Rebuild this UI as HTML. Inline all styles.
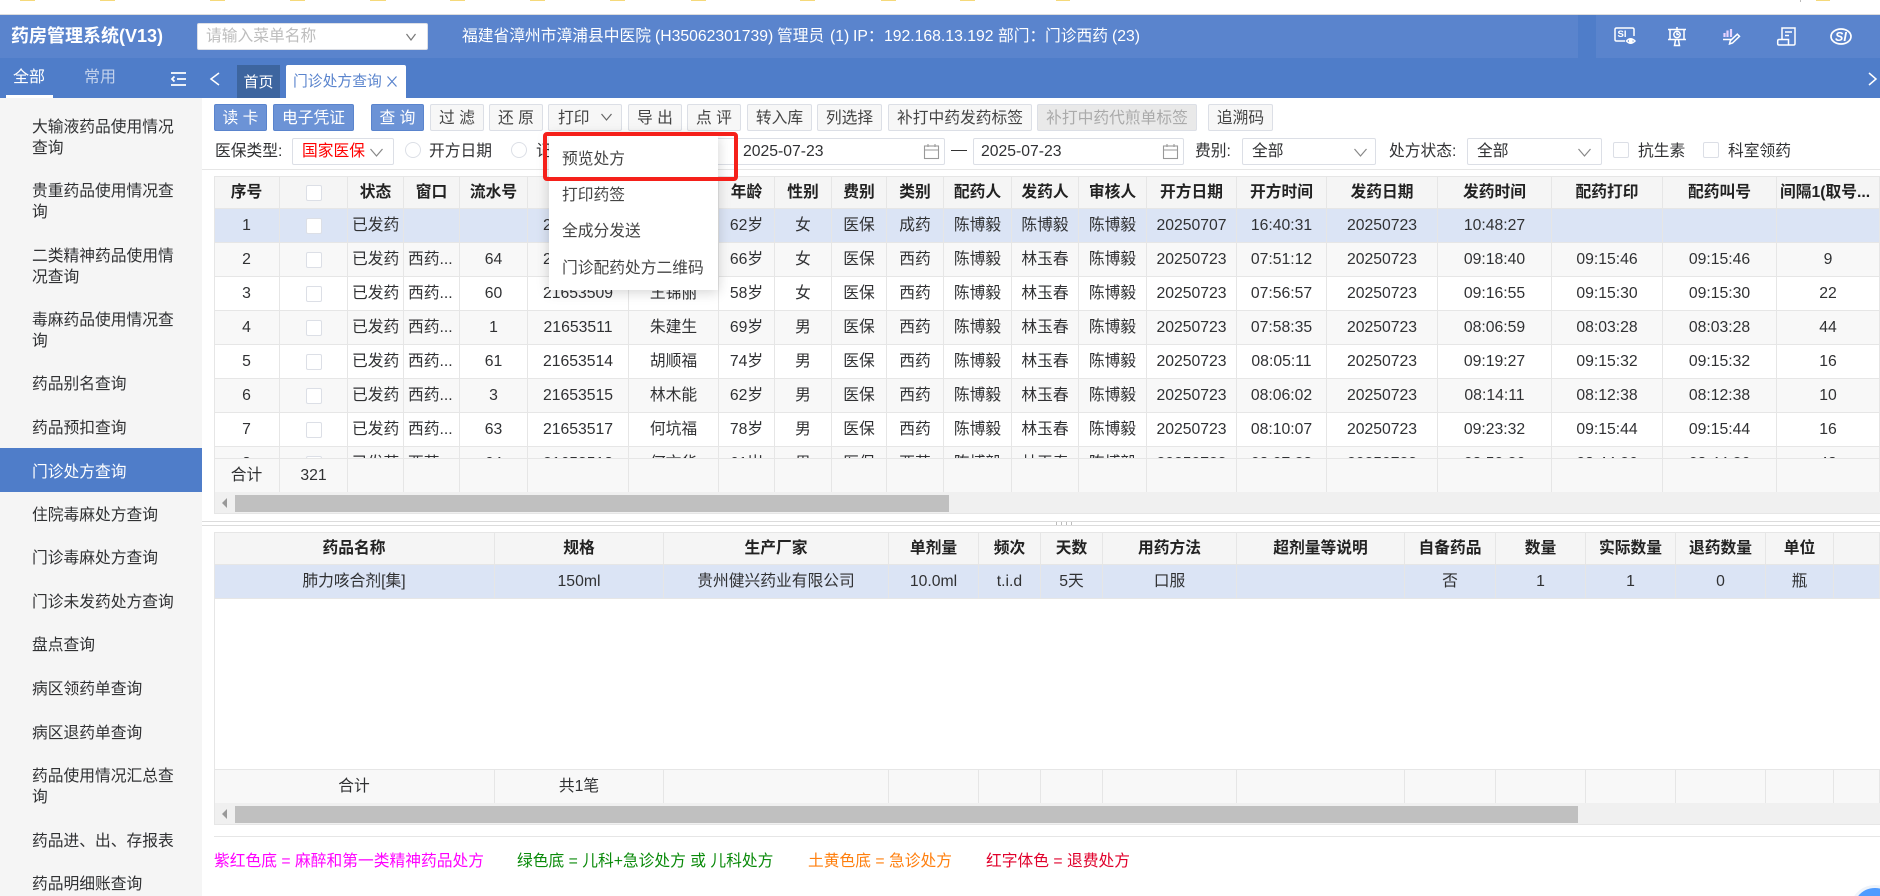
<!DOCTYPE html>
<html lang="zh-CN">
<head>
<meta charset="utf-8">
<title>门诊处方查询</title>
<style>
*{box-sizing:border-box}
html,body{margin:0;padding:0;width:1880px;height:896px;overflow:hidden;background:#fff}
body{position:relative;font-family:"Liberation Sans","Noto Sans CJK SC",sans-serif;font-size:15.75px;color:#303133}
.a{position:absolute;white-space:nowrap}
.y{position:absolute;top:0;height:1px;background:#f5d97a}
.m{position:absolute;left:32px;width:145px;line-height:21px;color:#303133}
.b{position:absolute;top:104px;height:27px;line-height:27px;text-align:center;border:1px solid #dcdfe6;background:#f7f7f7;border-radius:2px;color:#444;white-space:pre}
.p{background:#6c93d6;border-color:#5a84cd;color:#fff}
.d{background:#e9e9e9;color:#aaa}
.s{position:absolute;top:138px;height:27px;border:1px solid #dcdfe6;border-radius:2px;background:#fff;line-height:25px;white-space:nowrap}
.c{position:absolute;width:16px;height:16px;border:1px solid #dcdfe6;border-radius:2px;background:#fff}
.r{position:absolute;top:142px;width:16px;height:16px;border:1px solid #dcdfe6;border-radius:50%;background:#fff}
.tw{position:absolute;left:214px;width:1666px;overflow:hidden}
table{border-collapse:separate;border-spacing:0;table-layout:fixed;width:1666px}
td,th{height:34px;padding:1px 0 0;border-right:1px solid #e6e6e6;border-bottom:1px solid #e6e6e6;text-align:center;white-space:nowrap;overflow:hidden;font-weight:normal;position:relative;line-height:20px;vertical-align:middle}
th{height:33px;font-weight:bold;background:#f5f5f5;color:#222}
tr:first-child th{border-top:1px solid #e6e6e6}
tr.z td{background:#f8f8f8}
tr.w td{background:#fff}
tr.sel td{background:#dbe4f5}
tr.f td{background:#f8f8f8}
td.l{text-align:left;padding-left:4px}
i.k{display:block;width:16px;height:16px;border:1px solid #dcdfe6;border-radius:2px;background:#fff;margin:0 auto}
.tk{position:absolute;left:214px;width:1666px;background:#f0f0f0;border-bottom:1px solid #e6e6e6;border-left:1px solid #e6e6e6}
.th{position:absolute;left:235px;background:#c0c0c0}
.tri{position:absolute;left:222px;width:0;height:0;border-top:5px solid transparent;border-bottom:5px solid transparent;border-right:5px solid #999}
.dd{position:absolute;left:549px;top:134px;width:169px;height:156px;background:#fff;box-shadow:0 2px 12px rgba(0,0,0,.18);z-index:5}
.dd div{position:absolute;left:13px;line-height:22px;white-space:nowrap;color:#444}
svg{position:absolute;overflow:visible}
</style>
</head>
<body>
<div class="y" style="left:20px;width:15px"></div><div class="y" style="left:100px;width:15px"></div><div class="y" style="left:210px;width:15px"></div><div class="y" style="left:290px;width:15px"></div><div class="y" style="left:370px;width:16px"></div><div class="y" style="left:450px;width:15px"></div><div class="y" style="left:530px;width:15px"></div><div class="y" style="left:610px;width:15px"></div><div class="y" style="left:691px;width:15px"></div><div class="y" style="left:800px;width:15px"></div><div class="y" style="left:881px;width:15px"></div><div class="y" style="left:960px;width:15px"></div><div class="y" style="left:1056px;width:14px"></div><div class="y" style="left:1816px;width:14px"></div>
<div class="a" style="left:1800px;top:0;width:1px;height:2px;background:#bbb"></div>

<!-- top header -->
<div class="a" style="left:0;top:14px;width:1880px;height:1px;background:#dcdcdc"></div>
<div class="a" style="left:0;top:15px;width:1880px;height:43px;background:#5a84cd"></div>
<div class="a" style="left:1578px;top:15px;width:18px;height:43px;background:#4f7dc9"></div>
<div class="a" style="left:11px;top:23px;line-height:26px;font-size:18px;font-weight:bold;color:#fff">药房管理系统(V13)</div>
<div class="a" style="left:197px;top:23px;width:231px;height:27px;background:#fff;border:1px solid #dcdfe6;border-radius:2px;line-height:25px;padding-left:8px;color:#bdbdbd">请输入菜单名称
<svg style="left:208px;top:9px" width="10" height="8" viewBox="0 0 10 8"><path d="M.5 1 5 7 9.5 1" fill="none" stroke="#777" stroke-width="1.2"/></svg></div>
<div class="a" style="left:462px;top:24px;line-height:25px;color:#fff">福建省漳州市漳浦县中医院</div>
<div class="a" style="left:655px;top:24px;line-height:25px;color:#fff">(H35062301739)</div>
<div class="a" style="left:777px;top:24px;line-height:25px;color:#fff">管理员</div>
<div class="a" style="left:830px;top:24px;line-height:25px;color:#fff">(1)</div>
<div class="a" style="left:853px;top:24px;line-height:25px;color:#fff">IP：</div>
<div class="a" style="left:884px;top:24px;line-height:25px;color:#fff">192.168.13.192</div>
<div class="a" style="left:998px;top:24px;line-height:25px;color:#fff">部门：</div>
<div class="a" style="left:1045px;top:24px;line-height:25px;color:#fff">门诊西药</div>
<div class="a" style="left:1112px;top:24px;line-height:25px;color:#fff">(23)</div>

<svg style="left:1614px;top:27px" width="22" height="18" viewBox="0 0 22 18" fill="none" stroke="#fff" stroke-width="1.5"><path d="M11 14H2.500Q1 14 1 12.500V2.500Q1 1 2.500 1h16Q20 1 20 2.500V9"/><path d="M12.500 14q4-4.500 8.500 0q-4.500 4.500-8.500 0z"/><circle cx="16.800" cy="14" r="1.200" fill="#fff"/><text x="3.500" y="10" font-size="9.500" font-weight="bold" fill="#fff" stroke="none" font-family="Liberation Sans">SI</text></svg>
<svg style="left:1668px;top:27px" width="18" height="19" viewBox="0 0 18 19" fill="none" stroke="#fff" stroke-width="1.500"><path d="M0 2.500h18M0 12.500h18M2 2.500v10M16 2.500v10M9 0v2.500"/><circle cx="9" cy="7.500" r="3.200"/><path d="M9 5.500v2h2M7.500 13l-1 5.500h5l-1-5.500"/></svg>
<svg style="left:1723px;top:28px" width="17" height="17" viewBox="0 0 17 17" fill="none" stroke="#fff" stroke-width="1.500"><path d="M1.500 5v4M4.500 2.500v6.500M8 1v8" stroke="#e6d3ff" stroke-width="2.200"/><path d="M0 11.500h8"/><path d="M6.500 16l.8-3.300 7-6.500 2.200 2.200-7 6.600z"/></svg>
<svg style="left:1777px;top:27px" width="19" height="19" viewBox="0 0 19 19" fill="none" stroke="#fff" stroke-width="1.500"><path d="M5 12V1h13v15.500q0 1.500-1.500 1.500H3"/><path d="M3 18H2q-1.300 0-1.300-1.500V14q0-1.500 1.300-1.500h9.500V18"/><path d="M8 5h7M8 8.500h4"/></svg>
<svg style="left:1830px;top:28px" width="22" height="17" viewBox="0 0 22 17" fill="none" stroke="#fff" stroke-width="1.700"><ellipse cx="11" cy="8.500" rx="10" ry="7.500"/><text x="5" y="13" font-size="12.500" font-weight="bold" font-style="italic" fill="#fff" stroke="none" font-family="Liberation Sans">SI</text></svg>

<!-- tab bar -->
<div class="a" style="left:0;top:58px;width:1880px;height:40px;background:#4f7dc9"></div>
<div class="a" style="left:13px;top:66px;line-height:23px;color:#fff;font-size:16px">全部</div>
<div class="a" style="left:6px;top:95px;width:47px;height:3px;background:#fff"></div>
<div class="a" style="left:84px;top:66px;line-height:23px;color:#c3d2ec;font-size:16px">常用</div>
<svg style="left:171px;top:72px" width="15" height="14" viewBox="0 0 15 14" fill="none" stroke="#fff" stroke-width="1.800"><path d="M0 1h15M6 7h9M0 13h15M3.500 4.500 1 7l2.500 2.500"/></svg>
<svg style="left:210px;top:72px" width="10" height="14" viewBox="0 0 10 14" fill="none" stroke="#fff" stroke-width="1.500"><path d="M9 1 1 7l8 6"/></svg>
<svg style="left:1868px;top:72px" width="9" height="14" viewBox="0 0 9 14" fill="none" stroke="#fff" stroke-width="1.500"><path d="M1 1l7 6-7 6"/></svg>
<div class="a" style="left:237px;top:65px;width:43px;height:33px;background:#3d659f;color:#fff;text-align:center;line-height:35px;font-size:15px">首页</div>
<div class="a" style="left:286px;top:65px;width:120px;height:33px;background:#fff;border-radius:2px 2px 0 0;color:#5a84cd;line-height:35px;padding-left:7px;font-size:14.800px">门诊处方查询</div>
<svg style="left:387px;top:76px" width="10" height="11" viewBox="0 0 10 11" fill="none" stroke="#5a84cd" stroke-width="1.200"><path d="M.5.500l9 10M9.500.500l-9 10"/></svg>

<!-- sidebar -->
<div class="a" style="left:0;top:98px;width:202px;height:798px;background:#f5f5f5"></div>
<div class="a" style="left:0;top:448px;width:202px;height:44px;background:#4f7dc9"></div>
<div class="m" style="top:117px">大输液药品使用情况<br>查询</div>
<div class="m" style="top:181px">贵重药品使用情况查<br>询</div>
<div class="m" style="top:246px">二类精神药品使用情<br>况查询</div>
<div class="m" style="top:310px">毒麻药品使用情况查<br>询</div>
<div class="m" style="top:374px">药品别名查询</div>
<div class="m" style="top:418px">药品预扣查询</div>
<div class="m" style="top:462px;color:#fff">门诊处方查询</div>
<div class="m" style="top:505px">住院毒麻处方查询</div>
<div class="m" style="top:548px">门诊毒麻处方查询</div>
<div class="m" style="top:592px">门诊未发药处方查询</div>
<div class="m" style="top:635px">盘点查询</div>
<div class="m" style="top:679px">病区领药单查询</div>
<div class="m" style="top:723px">病区退药单查询</div>
<div class="m" style="top:766px">药品使用情况汇总查<br>询</div>
<div class="m" style="top:831px">药品进、出、存报表</div>
<div class="m" style="top:874px">药品明细账查询</div>

<!-- toolbar -->
<div class="b p" style="left:214px;width:53px">读 卡</div>
<div class="b p" style="left:273px;width:81px">电子凭证</div>
<div class="b p" style="left:371px;width:53px">查 询</div>
<div class="b" style="left:430px;width:54px">过 滤</div>
<div class="b" style="left:489px;width:54px">还 原</div>
<div class="b" style="left:548px;width:74px;text-align:left;padding-left:9px">打印<svg style="left:52px;top:8px" width="11" height="8" viewBox="0 0 11 8"><path d="M.5 1 5.500 7 10.500 1" fill="none" stroke="#666" stroke-width="1.200"/></svg></div>
<div class="b" style="left:628px;width:54px">导 出</div>
<div class="b" style="left:687px;width:54px">点 评</div>
<div class="b" style="left:747px;width:65px">转入库</div>
<div class="b" style="left:817px;width:65px">列选择</div>
<div class="b" style="left:888px;width:144px">补打中药发药标签</div>
<div class="b d" style="left:1037px;width:160px">补打中药代煎单标签</div>
<div class="b" style="left:1208px;width:65px">追溯码</div>

<!-- filter row -->
<div class="a" style="left:215px;top:139px;line-height:25px">医保类型:</div>
<div class="s" style="left:292px;width:102px;padding-left:9px;color:#f00">国家医保<svg style="left:77px;top:9px" width="13" height="9" viewBox="0 0 13 9"><path d="M.5 1 6.500 8 12.500 1" fill="none" stroke="#888" stroke-width="1.200"/></svg></div>
<div class="r" style="left:405px"></div>
<div class="a" style="left:429px;top:139px;line-height:25px">开方日期</div>
<div class="r" style="left:511px"></div>
<div class="a" style="left:536px;top:139px;line-height:25px">记账日期</div>
<div class="s" style="left:700px;width:245px;padding-left:42px">2025-07-23<svg style="left:223px;top:5px" width="15" height="15" viewBox="0 0 15 15" fill="none" stroke="#999" stroke-width="1.100"><rect x=".5" y="2" width="14" height="12.500"/><path d="M.5 6h14M4 0v3M11 0v3"/></svg></div>
<div class="a" style="left:951px;top:150px;width:16px;height:1px;background:#333"></div>
<div class="s" style="left:973px;width:211px;padding-left:7px">2025-07-23<svg style="left:189px;top:5px" width="15" height="15" viewBox="0 0 15 15" fill="none" stroke="#999" stroke-width="1.100"><rect x=".5" y="2" width="14" height="12.500"/><path d="M.5 6h14M4 0v3M11 0v3"/></svg></div>
<div class="a" style="left:1195px;top:139px;line-height:25px">费别:</div>
<div class="s" style="left:1242px;width:134px;padding-left:9px">全部<svg style="left:111px;top:9px" width="13" height="9" viewBox="0 0 13 9"><path d="M.5 1 6.500 8 12.500 1" fill="none" stroke="#888" stroke-width="1.200"/></svg></div>
<div class="a" style="left:1389px;top:139px;line-height:25px">处方状态:</div>
<div class="s" style="left:1467px;width:135px;padding-left:9px">全部<svg style="left:110px;top:9px" width="13" height="9" viewBox="0 0 13 9"><path d="M.5 1 6.500 8 12.500 1" fill="none" stroke="#888" stroke-width="1.200"/></svg></div>
<div class="c" style="left:1613px;top:142px"></div>
<div class="a" style="left:1638px;top:139px;line-height:25px">抗生素</div>
<div class="c" style="left:1703px;top:142px"></div>
<div class="a" style="left:1728px;top:139px;line-height:25px">科室领药</div>
<div class="a" style="left:202px;top:169px;width:1678px;height:1px;background:#e6e6e6"></div>

<!-- main grid -->
<div class="a" style="left:214px;top:176px;width:1px;height:338px;background:#e6e6e6;z-index:2"></div>
<div class="tw" style="top:176px;height:282px">
<table>
<colgroup><col style="width:66px"><col style="width:68px"><col style="width:56px"><col style="width:56px"><col style="width:68px"><col style="width:101px"><col style="width:90px"><col style="width:56px"><col style="width:57px"><col style="width:55px"><col style="width:57px"><col style="width:68px"><col style="width:67px"><col style="width:68px"><col style="width:90px"><col style="width:90px"><col style="width:111px"><col style="width:114px"><col style="width:111px"><col style="width:114px"><col style="width:103px"></colgroup>
<tr><th>序号</th><th><i class="k" style="margin-left:26px"></i></th><th>状态</th><th>窗口</th><th>流水号</th><th>处方号</th><th>姓名</th><th>年龄</th><th>性别</th><th>费别</th><th>类别</th><th>配药人</th><th>发药人</th><th>审核人</th><th>开方日期</th><th>开方时间</th><th>发药日期</th><th>发药时间</th><th>配药打印</th><th>配药叫号</th><th style="text-align:left;padding-left:3px">间隔1(取号...</th></tr>
<tr class="sel"><td>1</td><td><i class="k"></i></td><td class="l">已发药</td><td></td><td></td><td>21653501</td><td></td><td>62岁</td><td>女</td><td>医保</td><td>成药</td><td>陈博毅</td><td>陈博毅</td><td>陈博毅</td><td>20250707</td><td>16:40:31</td><td>20250723</td><td>10:48:27</td><td></td><td></td><td></td></tr>
<tr class="z"><td>2</td><td><i class="k"></i></td><td class="l">已发药</td><td class="l">西药...</td><td>64</td><td>21653508</td><td></td><td>66岁</td><td>女</td><td>医保</td><td>西药</td><td>陈博毅</td><td>林玉春</td><td>陈博毅</td><td>20250723</td><td>07:51:12</td><td>20250723</td><td>09:18:40</td><td>09:15:46</td><td>09:15:46</td><td>9</td></tr>
<tr class="w"><td>3</td><td><i class="k"></i></td><td class="l">已发药</td><td class="l">西药...</td><td>60</td><td>21653509</td><td>王锦丽</td><td>58岁</td><td>女</td><td>医保</td><td>西药</td><td>陈博毅</td><td>林玉春</td><td>陈博毅</td><td>20250723</td><td>07:56:57</td><td>20250723</td><td>09:16:55</td><td>09:15:30</td><td>09:15:30</td><td>22</td></tr>
<tr class="z"><td>4</td><td><i class="k"></i></td><td class="l">已发药</td><td class="l">西药...</td><td>1</td><td>21653511</td><td>朱建生</td><td>69岁</td><td>男</td><td>医保</td><td>西药</td><td>陈博毅</td><td>林玉春</td><td>陈博毅</td><td>20250723</td><td>07:58:35</td><td>20250723</td><td>08:06:59</td><td>08:03:28</td><td>08:03:28</td><td>44</td></tr>
<tr class="w"><td>5</td><td><i class="k"></i></td><td class="l">已发药</td><td class="l">西药...</td><td>61</td><td>21653514</td><td>胡顺福</td><td>74岁</td><td>男</td><td>医保</td><td>西药</td><td>陈博毅</td><td>林玉春</td><td>陈博毅</td><td>20250723</td><td>08:05:11</td><td>20250723</td><td>09:19:27</td><td>09:15:32</td><td>09:15:32</td><td>16</td></tr>
<tr class="z"><td>6</td><td><i class="k"></i></td><td class="l">已发药</td><td class="l">西药...</td><td>3</td><td>21653515</td><td>林木能</td><td>62岁</td><td>男</td><td>医保</td><td>西药</td><td>陈博毅</td><td>林玉春</td><td>陈博毅</td><td>20250723</td><td>08:06:02</td><td>20250723</td><td>08:14:11</td><td>08:12:38</td><td>08:12:38</td><td>10</td></tr>
<tr class="w"><td>7</td><td><i class="k"></i></td><td class="l">已发药</td><td class="l">西药...</td><td>63</td><td>21653517</td><td>何坑福</td><td>78岁</td><td>男</td><td>医保</td><td>西药</td><td>陈博毅</td><td>林玉春</td><td>陈博毅</td><td>20250723</td><td>08:10:07</td><td>20250723</td><td>09:23:32</td><td>09:15:44</td><td>09:15:44</td><td>16</td></tr>
<tr class="z"><td>8</td><td><i class="k"></i></td><td class="l">已发药</td><td class="l">西药...</td><td>64</td><td>21653518</td><td>何文华</td><td>61岁</td><td>男</td><td>医保</td><td>西药</td><td>陈博毅</td><td>林玉春</td><td>陈博毅</td><td>20250723</td><td>08:07:28</td><td>20250723</td><td>08:50:26</td><td>08:44:26</td><td>08:44:26</td><td>48</td></tr>
</table>
</div>
<div class="tw" style="top:458px;height:34px;border-top:1px solid #e6e6e6">
<table>
<colgroup><col style="width:66px"><col style="width:68px"><col style="width:56px"><col style="width:56px"><col style="width:68px"><col style="width:101px"><col style="width:90px"><col style="width:56px"><col style="width:57px"><col style="width:55px"><col style="width:57px"><col style="width:68px"><col style="width:67px"><col style="width:68px"><col style="width:90px"><col style="width:90px"><col style="width:111px"><col style="width:114px"><col style="width:111px"><col style="width:114px"><col style="width:103px"></colgroup>
<tr class="f"><td style="height:33px">合计</td><td>321</td><td></td><td></td><td></td><td></td><td></td><td></td><td></td><td></td><td></td><td></td><td></td><td></td><td></td><td></td><td></td><td></td><td></td><td></td><td></td></tr>
</table>
</div>
<div class="tk" style="top:492px;height:22px"></div>
<div class="tri" style="top:498px"></div>
<div class="th" style="top:495px;width:714px;height:17px"></div>

<!-- splitter -->
<div class="a" style="left:202px;top:521px;width:1678px;height:1px;background:#dcdcdc"></div>
<div class="a" style="left:202px;top:525px;width:1678px;height:1px;background:#dcdcdc"></div>
<div class="a" style="left:1056px;top:522px;width:1px;height:3px;background:#bbb"></div>
<div class="a" style="left:1061px;top:522px;width:1px;height:3px;background:#bbb"></div>
<div class="a" style="left:1066px;top:522px;width:1px;height:3px;background:#bbb"></div>
<div class="a" style="left:1071px;top:522px;width:1px;height:3px;background:#bbb"></div>

<!-- detail grid -->
<div class="a" style="left:214px;top:532px;width:1px;height:292px;background:#e6e6e6;z-index:2"></div>
<div class="tw" style="top:532px;height:68px">
<table>
<colgroup><col style="width:281px"><col style="width:169px"><col style="width:225px"><col style="width:90px"><col style="width:62px"><col style="width:62px"><col style="width:134px"><col style="width:168px"><col style="width:91px"><col style="width:90px"><col style="width:90px"><col style="width:90px"><col style="width:68px"><col style="width:46px"></colgroup>
<tr><th>药品名称</th><th>规格</th><th>生产厂家</th><th>单剂量</th><th>频次</th><th>天数</th><th>用药方法</th><th>超剂量等说明</th><th>自备药品</th><th>数量</th><th>实际数量</th><th>退药数量</th><th>单位</th><th></th></tr>
<tr class="sel"><td>肺力咳合剂[集]</td><td>150ml</td><td>贵州健兴药业有限公司</td><td>10.0ml</td><td>t.i.d</td><td>5天</td><td>口服</td><td></td><td>否</td><td>1</td><td>1</td><td>0</td><td>瓶</td><td></td></tr>
</table>
</div>
<div class="tw" style="top:769px;height:34px;border-top:1px solid #e6e6e6">
<table>
<colgroup><col style="width:281px"><col style="width:169px"><col style="width:225px"><col style="width:90px"><col style="width:62px"><col style="width:62px"><col style="width:134px"><col style="width:168px"><col style="width:91px"><col style="width:90px"><col style="width:90px"><col style="width:90px"><col style="width:68px"><col style="width:46px"></colgroup>
<tr class="f"><td style="height:33px">合计</td><td>共1笔</td><td></td><td></td><td></td><td></td><td></td><td></td><td></td><td></td><td></td><td></td><td></td><td></td></tr>
</table>
</div>
<div class="tk" style="top:803px;height:22px"></div>
<div class="tri" style="top:809px"></div>
<div class="th" style="top:806px;width:1343px;height:17px"></div>

<div class="a" style="left:214px;top:836px;width:1666px;height:1px;background:#e6e6e6"></div>
<div class="a" style="left:214px;top:850px;line-height:23px;color:#f0f">紫红色底 = 麻醉和第一类精神药品处方</div>
<div class="a" style="left:517px;top:850px;line-height:23px;color:#0a8a0a">绿色底 = 儿科+急诊处方 或 儿科处方</div>
<div class="a" style="left:808px;top:850px;line-height:23px;color:#ff7f0e">土黄色底 = 急诊处方</div>
<div class="a" style="left:986px;top:850px;line-height:23px;color:#e0002b">红字体色 = 退费处方</div>

<div class="a" style="left:1850px;top:885px;width:50px;height:50px;border-radius:50%;background:#4f9bff;border:3px solid #eef3fa"></div>

<!-- dropdown -->
<div class="dd">
<div style="top:15px">预览处方</div>
<div style="top:51px">打印药签</div>
<div style="top:87px">全成分发送</div>
<div style="top:124px">门诊配药处方二维码</div>
</div>
<div class="a" style="left:543px;top:132px;width:195px;height:49px;border:4px solid #f5201a;border-radius:4px;z-index:6"></div>
</body>
</html>
